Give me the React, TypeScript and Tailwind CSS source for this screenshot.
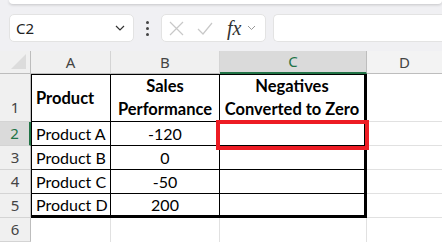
import React from "react";

const cellFont = { fontFamily: "Lato, 'Open Sans', sans-serif" };

function Dots() {
  return (
    <div className="flex flex-col items-center justify-center gap-[3px] w-[27px]">
      <div className="w-[3px] h-[3px] rounded-full bg-[#444]" />
      <div className="w-[3px] h-[3px] rounded-full bg-[#444]" />
      <div className="w-[3px] h-[3px] rounded-full bg-[#444]" />
    </div>
  );
}

export default function App() {
  const hdr = "flex items-center justify-center text-[15px] text-[#444] border-r border-[#d4d4d4] border-b border-b-[#bdbdbd]";
  const rh = "flex items-end justify-center pb-[1px] text-[15px] text-[#444] bg-[#f0f0f0] border-b border-[#d4d4d4] border-r border-r-[#bdbdbd]";
  const rows = [
    { n: "3", a: "Product B", b: "0" },
    { n: "4", a: "Product C", b: "-50" },
    { n: "5", a: "Product D", b: "200" },
  ];
  return (
    <div className="relative w-[442px] h-[242px] overflow-hidden bg-white" style={{ fontFamily: "'Noto Sans', 'Open Sans', sans-serif" }}>
      {/* toolbar */}
      <div className="h-[51px] bg-[#f0f0f3] flex flex-col">
        <div className="h-[4px] ml-[9px] bg-white rounded-b-[6px] shadow-[0_1px_3px_rgba(0,0,0,0.18)]" />
        <div className="flex items-center mt-[10px] h-[28px]">
          <div className="ml-[9px] w-[125px] h-[28px] bg-white rounded-[5px] border border-[#e3e3e3] flex items-center justify-between pl-[6px] pr-[8px]">
            <span className="text-[15px] text-[#222] leading-none">C2</span>
            <svg width="10" height="6" viewBox="0 0 10 6"><path d="M1 1l4 4 4-4" fill="none" stroke="#333" strokeWidth="1.2" /></svg>
          </div>
          <Dots />
          <div className="w-[105px] h-[28px] bg-white rounded-[5px] border border-[#e3e3e3] flex items-center pl-[7px]">
            <svg width="15" height="15" viewBox="0 0 15 15"><path d="M1 1l13 13M14 1L1 14" stroke="#c8c8c8" strokeWidth="1.2" /></svg>
            <svg className="ml-[13px]" width="16" height="13" viewBox="0 0 16 13"><path d="M1 7l5 5L15 1" fill="none" stroke="#c8c8c8" strokeWidth="1.2" /></svg>
            <span className="ml-[14px] text-[20px] italic leading-none text-[#333]" style={{ fontFamily: "'Liberation Serif', serif" }}>fx</span>
            <svg className="ml-[6px]" width="9" height="6" viewBox="0 0 9 6"><path d="M1 1l3.5 3.5L8 1" fill="none" stroke="#999" strokeWidth="1" /></svg>
          </div>
          <div className="ml-[7px] flex-1 h-[28px] bg-white rounded-l-[5px] border border-r-0 border-[#e3e3e3]" />
        </div>
      </div>

      {/* grid */}
      <div className="grid grid-cols-[31px_80px_109px_147px_1fr] grid-rows-[23px_48px_24px_24px_24px_24px_24px]">
        {/* header */}
        <div className="bg-[#f0f0f0] border-r border-r-[#bdbdbd] border-b border-b-[#bdbdbd] relative">
          <div className="absolute right-[4px] bottom-[4px] w-0 h-0 border-l-[15px] border-l-transparent border-b-[15px] border-b-[#dcdcdc]" />
        </div>
        <div className={hdr + " bg-[#f0f0f0]"}>A</div>
        <div className={hdr + " bg-[#f0f0f0]"}>B</div>
        <div className="flex items-center justify-center text-[15px] text-[#217346] bg-[#dadada] border-r border-[#bdbdbd] border-b-2 border-b-[#217346]">C</div>
        <div className={hdr + " bg-[#f3f3f3] border-r-0"}>D</div>

        {/* row 1 */}
        <div className={rh + " pb-[3px]"}>1</div>
        <div className="flex items-center pl-[4px] border-l border-t border-r border-b border-black text-[16.5px] font-bold text-black" style={cellFont}>Product</div>
        <div className="flex flex-col items-center justify-center border-t border-r border-b border-black text-[16.5px] font-bold text-black leading-[23px]" style={cellFont}>
          <span>Sales</span><span>Performance</span>
        </div>
        <div className="flex flex-col items-center justify-center border-t border-r-[3px] border-b border-black text-[16.5px] font-bold text-black leading-[23px]" style={cellFont}>
          <span>Negatives</span><span>Converted to Zero</span>
        </div>
        <div className="border-b border-[#e1e1e1]" />

        {/* row 2 */}
        <div className="flex items-end justify-center pb-[1px] text-[15px] text-[#217346] bg-[#dadada] border-b border-[#d4d4d4] border-r-2 border-r-[#217346]">2</div>
        <div className="flex items-center pl-[4px] border-l border-r border-b border-black text-[16px] text-black" style={cellFont}>Product A</div>
        <div className="flex items-center justify-center border-r border-b border-black text-[16px] text-black" style={cellFont}>-120</div>
        <div className="border-r-[3px] border-b border-black" />
        <div className="border-b border-[#e1e1e1]" />

        {rows.map((r, i) => {
          const last = i === rows.length - 1;
          const bb = last ? " border-b-[3px]" : " border-b";
          return (
            <React.Fragment key={r.n}>
              <div className={rh}>{r.n}</div>
              <div className={"flex items-center pl-[4px] border-l border-r border-black text-[16px] text-black" + bb} style={cellFont}>{r.a}</div>
              <div className={"flex items-center justify-center border-r border-black text-[16px] text-black" + bb} style={cellFont}>{r.b}</div>
              <div className={"border-r-[3px] border-black" + bb} />
              <div className="border-b border-[#e1e1e1]" />
            </React.Fragment>
          );
        })}

        {/* row 6 */}
        <div className={rh}>6</div>
        <div className="border-r border-[#e1e1e1]" />
        <div className="border-r border-[#e1e1e1]" />
        <div className="border-r border-[#e1e1e1]" />
        <div />
      </div>

      {/* annotation */}
      <div className="absolute left-[216px] top-[120px] w-[153px] h-[30px] border-[4px] border-[#ed1c24]" />
    </div>
  );
}
